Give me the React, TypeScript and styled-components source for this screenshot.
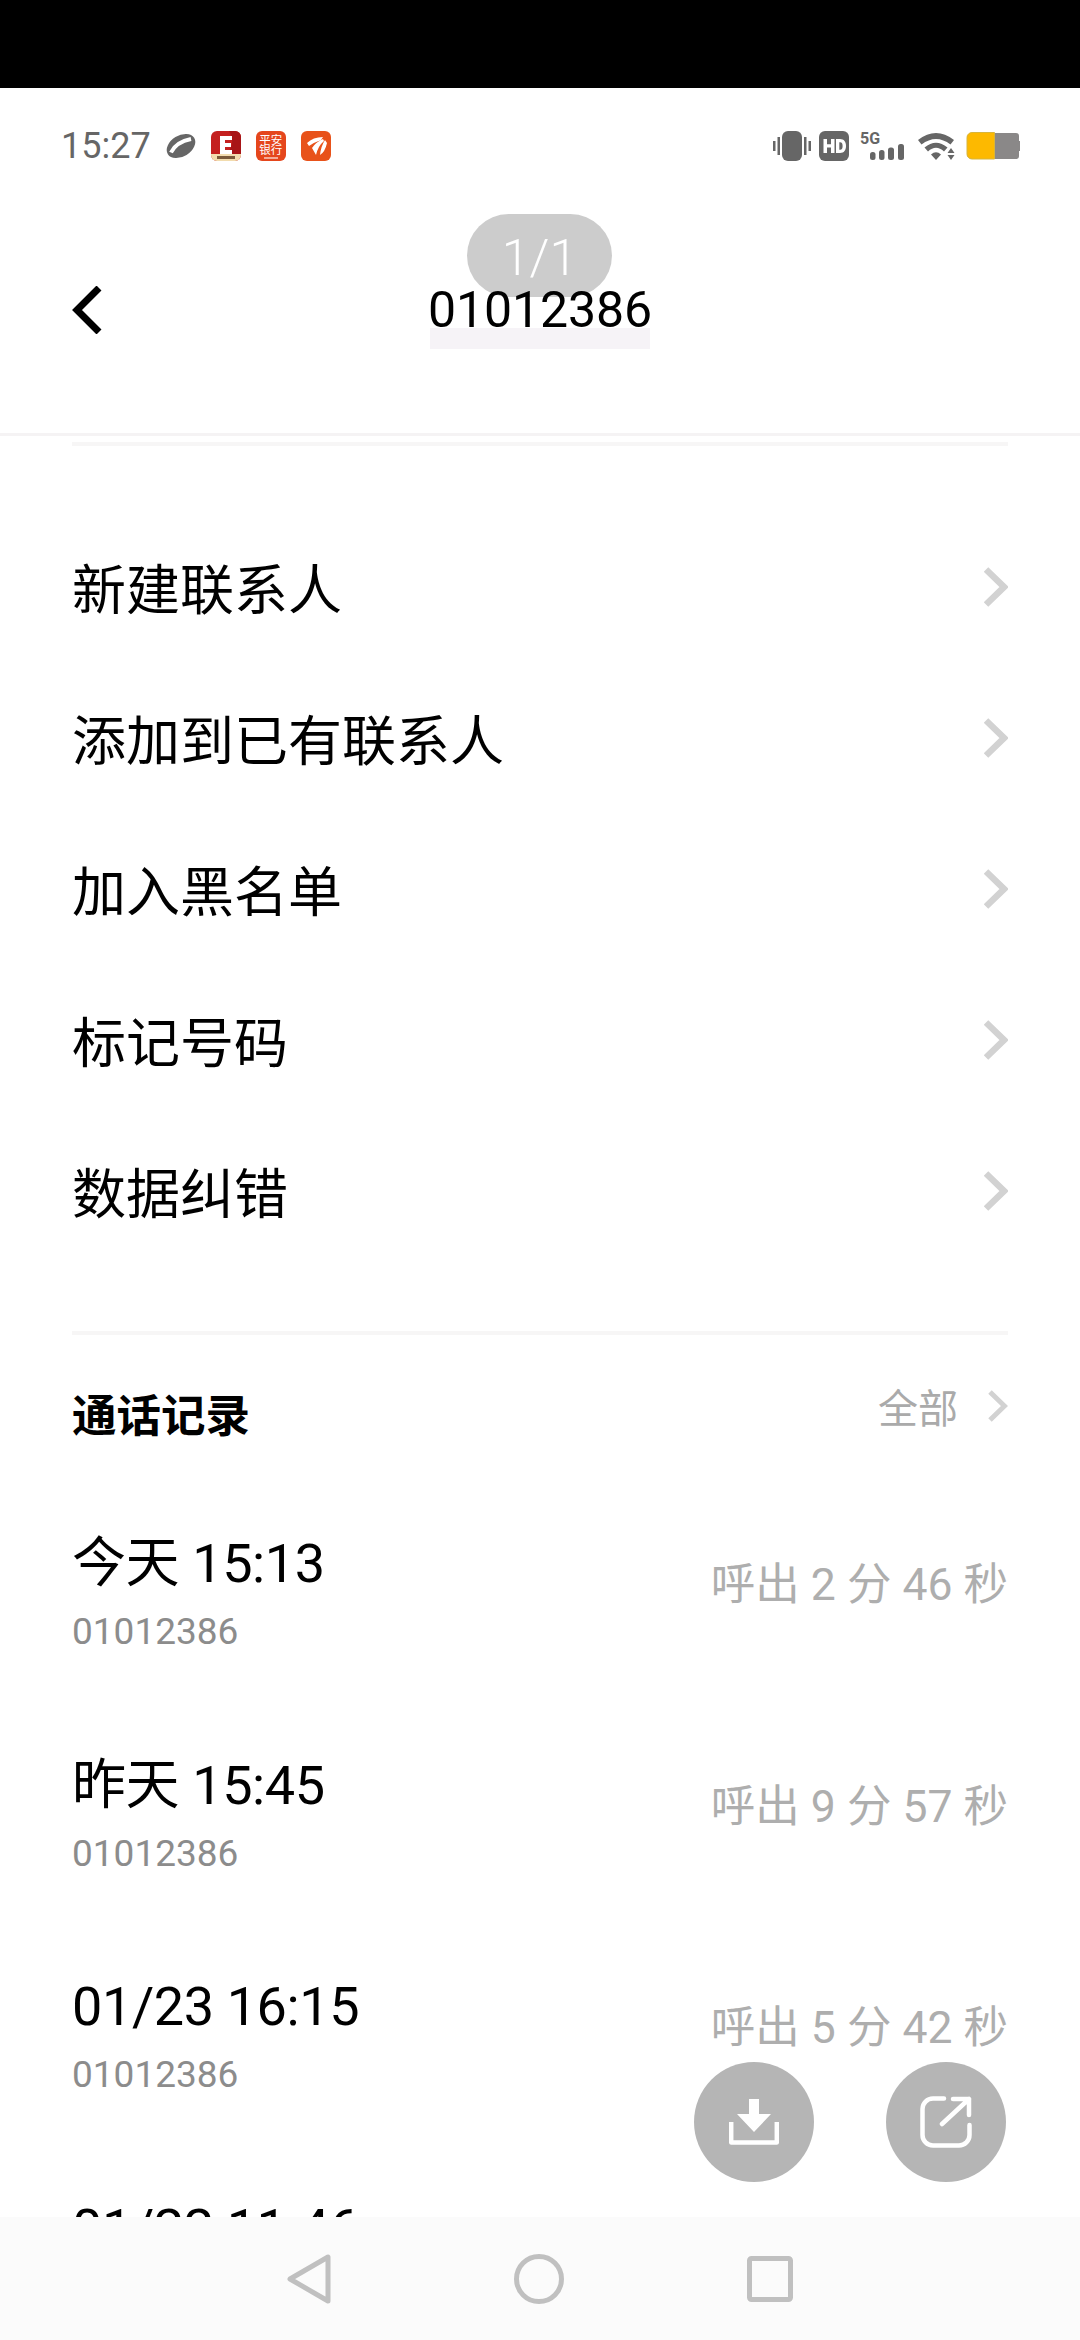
import React from 'react';
import styled, { createGlobalStyle } from 'styled-components';

const GlobalStyle = createGlobalStyle`
  html, body {
    margin: 0;
    padding: 0;
    background: #fff;
  }
  * {
    box-sizing: border-box;
  }
`;

const FONT = `Roboto, "Noto Sans CJK SC", sans-serif`;

const Page = styled.div`
  position: relative;
  width: 1080px;
  height: 2340px;
  display: flex;
  flex-direction: column;
  overflow: hidden;
  background: #fff;
  font-family: ${FONT};
`;

const TopBlack = styled.div`
  height: 88px;
  flex: none;
  background: #000;
`;

const StatusBar = styled.div`
  height: 116px;
  flex: none;
  display: flex;
  align-items: center;
  justify-content: space-between;
  padding: 0 60px 0 61px;
`;

const StatusGroup = styled.div`
  display: flex;
  align-items: center;
`;

const Clock = styled.span`
  font-size: 36px;
  color: #666;
  margin-right: 15px;
`;

const AppIcon = styled.div<{ $bg: string }>`
  width: 30px;
  height: 30px;
  margin-left: 15px;
  border-radius: 6px;
  background: ${({ $bg }) => $bg};
  display: flex;
  flex-direction: column;
  align-items: center;
  justify-content: center;
  overflow: hidden;
  color: #fff;
`;

const BankText = styled.span`
  font-size: 11.5px;
  line-height: 10.5px;
  width: 24px;
  text-align: center;
  font-family: "Noto Sans CJK SC", sans-serif;
`;

const BankMark = styled.div`
  width: 14px;
  height: 2px;
  margin-top: 2px;
  background: rgba(255, 255, 255, 0.55);
`;

const StatusIcon = styled.svg<{ $gap?: number; $lift?: number }>`
  display: block;
  margin-left: ${({ $gap }) => $gap ?? 0}px;
  margin-top: ${({ $lift }) => -($lift ?? 0)}px;
  fill: #666;
`;

const Header = styled.header`
  height: 232px;
  flex: none;
  display: grid;
  grid-template-columns: 1fr auto 1fr;
  align-items: start;
  padding: 82px 72px 0;
  border-bottom: 3px solid #f5f3f4;
`;

const BackIcon = styled.svg`
  display: block;
  width: 30px;
  height: 48px;
  fill: none;
  stroke: #000;
  stroke-width: 7px;
`;

const TitleBlock = styled.div`
  display: flex;
  flex-direction: column;
  align-items: center;
  margin-top: 7px;
`;

const Title = styled.div`
  font-size: 50px;
  line-height: 35px;
  color: #000;
  letter-spacing: -0.1px;
`;

const TitleShade = styled.div`
  width: 220px;
  height: 21px;
  background: #f6f3f7;
`;

const PagePill = styled.div`
  position: absolute;
  left: 467px;
  top: 214px;
  width: 145px;
  height: 83px;
  padding-top: 4px;
  border-radius: 42px;
  background: rgba(0, 0, 0, 0.2);
  display: flex;
  align-items: center;
  justify-content: center;
  color: #fff;
  font-size: 50px;
  font-weight: 300;
`;

const Content = styled.main`
  flex: 1;
  min-height: 0;
  overflow: hidden;
  padding: 6px 72px 0;
`;

const Rule = styled.div`
  height: 4px;
  background: #f7f6f6;
`;

const Menu = styled.div`
  padding: 65px 0 65px;
`;

const MenuRow = styled.div`
  height: 151px;
  display: flex;
  align-items: center;
  justify-content: space-between;
  font-size: 54px;
  color: #000;
`;

const Chevron = styled.svg<{ $small?: boolean }>`
  display: block;
  width: ${({ $small }) => ($small ? 20 : 24)}px;
  height: ${({ $small }) => ($small ? 32 : 40)}px;
  fill: none;
  stroke: #d2d2d2;
  stroke-width: ${({ $small }) => ($small ? 5 : 6.5)}px;
`;

const SectionHeader = styled.div`
  height: 100px;
  margin: 27px 0 19px;
  display: flex;
  align-items: center;
  justify-content: space-between;
`;

const SectionTitle = styled.h2`
  margin: 0;
  font-size: 44.5px;
  font-weight: 700;
  color: #000;
`;

const AllLink = styled.div`
  display: flex;
  align-items: center;
  gap: 30px;
  font-size: 40px;
  color: #aaa;
  margin-bottom: 12px;
`;

const LogRow = styled.div`
  height: 221.5px;
  display: flex;
  align-items: center;
  justify-content: space-between;
`;

const LogText = styled.div`
  align-self: flex-start;
  padding-top: 48px;
`;

const LogTime = styled.div`
  font-size: 54px;
  line-height: 70px;
  color: #000;
  letter-spacing: -0.4px;
`;

const LogNumber = styled.div`
  margin-top: 10px;
  font-size: 37px;
  line-height: 46px;
  color: #8c8c8c;
`;

const LogDuration = styled.div`
  font-size: 44.5px;
  color: #aeaeae;
  margin-bottom: 22px;
`;

const FabGroup = styled.div`
  position: absolute;
  left: 694px;
  top: 2062px;
  display: flex;
  gap: 72px;
`;

const Fab = styled.button`
  width: 120px;
  height: 120px;
  padding: 0;
  border: none;
  border-radius: 50%;
  background: #b5b5b5;
  display: flex;
  align-items: center;
  justify-content: center;
`;

const NavBar = styled.nav`
  height: 123px;
  flex: none;
  position: relative;
  z-index: 1;
  background: #fbfbfb;
  display: flex;
  align-items: center;
  justify-content: center;
  gap: 183px;
`;

const NavIcon = styled.svg`
  display: block;
  fill: none;
  stroke: #c0c0c0;
  stroke-width: 5px;
`;

const menuItems = ['新建联系人', '添加到已有联系人', '加入黑名单', '标记号码', '数据纠错'];

const callLogs = [
  { time: '今天 15:13', number: '01012386', duration: '呼出 2 分 46 秒' },
  { time: '昨天 15:45', number: '01012386', duration: '呼出 9 分 57 秒' },
  { time: '01/23 16:15', number: '01012386', duration: '呼出 5 分 42 秒' },
  { time: '01/22 11:46' },
];

const App = () => {
  return (
    <Page>
      <GlobalStyle />
      <TopBlack />
      <StatusBar>
        <StatusGroup>
          <Clock>15:27</Clock>
          <svg width="30" height="28" viewBox="0 0 30 28">
            <ellipse cx="15" cy="14" rx="15.500" ry="10.500" transform="rotate(-32 15 14)" fill="#666" />
            <path d="M5 20.500 Q10 10 25 7" stroke="#fff" strokeWidth="4" fill="none" />
          </svg>
          <AppIcon $bg="#c4201f">
            <svg width="30" height="30" viewBox="0 0 30 30">
              <path d="M18 0 H30 V24 H14 Q26 14 18 0z" fill="#a81517" />
              <path d="M9 5h12v4h-7v3h6v4h-6v3h7v4H9z" fill="#fff" />
              <rect y="23" width="30" height="7" fill="#f2dcae" />
              <rect x="6" y="25" width="18" height="3" fill="#7a5a3a" />
            </svg>
          </AppIcon>
          <AppIcon $bg="#e5461c">
            <BankText>平安银行</BankText>
            <BankMark />
          </AppIcon>
          <AppIcon $bg="#e8521a">
            <svg width="30" height="30" viewBox="0 0 30 30">
              <path d="M22 6 Q12 6 6 12 L8 15 Q14 11 20 9z M22 8 Q15 11 11 17 L15 24 Q17 15 23 10z M24 9 Q20 15 19 24 Q24 21 26 12z" fill="#fff" />
            </svg>
          </AppIcon>
        </StatusGroup>
        <StatusGroup>
          <StatusIcon width="38" height="30" viewBox="0 0 38 30">
            <rect x="9" y="0" width="20" height="30" rx="6" />
            <rect x="0" y="10" width="2.500" height="10" />
            <rect x="4.500" y="6" width="2.500" height="18" />
            <rect x="31" y="6" width="2.500" height="18" />
            <rect x="35.500" y="10" width="2.500" height="10" />
          </StatusIcon>
          <StatusIcon $gap={8} width="30" height="30" viewBox="0 0 30 30">
            <rect width="30" height="30" rx="6" />
            <path d="M4.500 8h3.500v5.300h4V8h3.500v14H12v-5.500H8V22H4.500z M17 8h4c4 0 6 2.800 6 7s-2 7-6 7h-4z M20.300 11.200v7.600h.8c1.900 0 2.500-1.500 2.500-3.800s-.6-3.800-2.500-3.800z" fill="#fff" fillRule="evenodd" />
          </StatusIcon>
          <StatusIcon $gap={11} $lift={6} width="45" height="36" viewBox="0 -6 45 36">
            <text x="0" y="13" fontSize="16" fontWeight="700" fontFamily="Roboto, sans-serif">5G</text>
            <rect x="10" y="21" width="5.500" height="8" rx="2.500" />
            <rect x="19" y="19" width="5.500" height="10" rx="2.500" />
            <rect x="28" y="16.500" width="6" height="12.500" rx="2.500" />
            <rect x="38" y="13" width="6" height="16" rx="2.500" />
          </StatusIcon>
          <StatusIcon $gap={13} width="37" height="30" viewBox="0 0 37 30">
            <path d="M0 9 Q18 -5 36 9 L32.500 13.500 Q18 2.500 3.500 13.500z M6.500 16.500 Q18 7 29.500 16.500 L26 20.500 Q18 13 10 20.500z M13 23.500 Q18 19 23 23.500 L18 29z" />
            <path d="M33 17l3.500 5h-7z M29.500 24h7l-3.500 5z" />
          </StatusIcon>
          <svg style={{ marginLeft: 11 }} width="54" height="28" viewBox="0 0 54 28">
            <path d="M6 1h44a3 3 0 0 1 3 3v5h1v10h-1v5a3 3 0 0 1-3 3H6a5 5 0 0 1-5-5V6a5 5 0 0 1 5-5z" fill="#8a8888" />
            <path d="M6 .500h22.500v26.500H6a5 5 0 0 1-5-5V5.500a5 5 0 0 1 5-5z" fill="#fdb900" stroke="#d9b53a" />
          </svg>
        </StatusGroup>
      </StatusBar>

      <Header>
        <BackIcon viewBox="0 0 30 48">
          <path d="M27 2 L5 24 L27 46" />
        </BackIcon>
        <TitleBlock>
          <Title>01012386</Title>
          <TitleShade />
        </TitleBlock>
      </Header>
      <PagePill>1/1</PagePill>

      <Content>
        <Rule />
        <Menu>
          {menuItems.map((item) => (
            <MenuRow key={item}>
              {item}
              <Chevron viewBox="0 0 24 40">
                <path d="M2 2.500 L20 20 L2 37.500" />
              </Chevron>
            </MenuRow>
          ))}
        </Menu>
        <Rule />
        <SectionHeader>
          <SectionTitle>通话记录</SectionTitle>
          <AllLink>
            全部
            <Chevron $small viewBox="0 0 20 32">
              <path d="M2 2 L16.500 16 L2 30" />
            </Chevron>
          </AllLink>
        </SectionHeader>
        {callLogs.map((log) => (
          <LogRow key={log.time}>
            <LogText>
              <LogTime>{log.time}</LogTime>
              {log.number && <LogNumber>{log.number}</LogNumber>}
            </LogText>
            {log.duration && <LogDuration>{log.duration}</LogDuration>}
          </LogRow>
        ))}
      </Content>

      <FabGroup>
        <Fab>
          <svg width="50" height="46" viewBox="0 0 50 46" fill="none">
            <path d="M20 0h10v15h12L25 33 8 15h12z" fill="#fff" />
            <path d="M2.200 23v20.500h45.600V23" stroke="#fff" strokeWidth="4.500" strokeLinejoin="round" />
          </svg>
        </Fab>
        <Fab>
          <svg width="52" height="52" viewBox="0 0 52 52" fill="none" stroke="#fff" strokeWidth="4.500" strokeLinecap="round" strokeLinejoin="round">
            <path d="M24 2.500H13A10.500 10.500 0 0 0 2.500 13V39A10.500 10.500 0 0 0 13 49.500H39A10.500 10.500 0 0 0 49.500 39V29" />
            <path d="M22 28L49 3M33 3H49V19" />
          </svg>
        </Fab>
      </FabGroup>

      <NavBar>
        <NavIcon width="44" height="50" viewBox="0 0 44 50">
          <path d="M41 3 V47 L3 25z" strokeLinejoin="round" />
        </NavIcon>
        <NavIcon width="50" height="50" viewBox="0 0 50 50">
          <circle cx="25" cy="25" r="22.500" />
        </NavIcon>
        <NavIcon width="46" height="46" viewBox="0 0 46 46">
          <rect x="2.500" y="2.500" width="41" height="41" rx="2" />
        </NavIcon>
      </NavBar>
    </Page>
  );
};

export default App;
